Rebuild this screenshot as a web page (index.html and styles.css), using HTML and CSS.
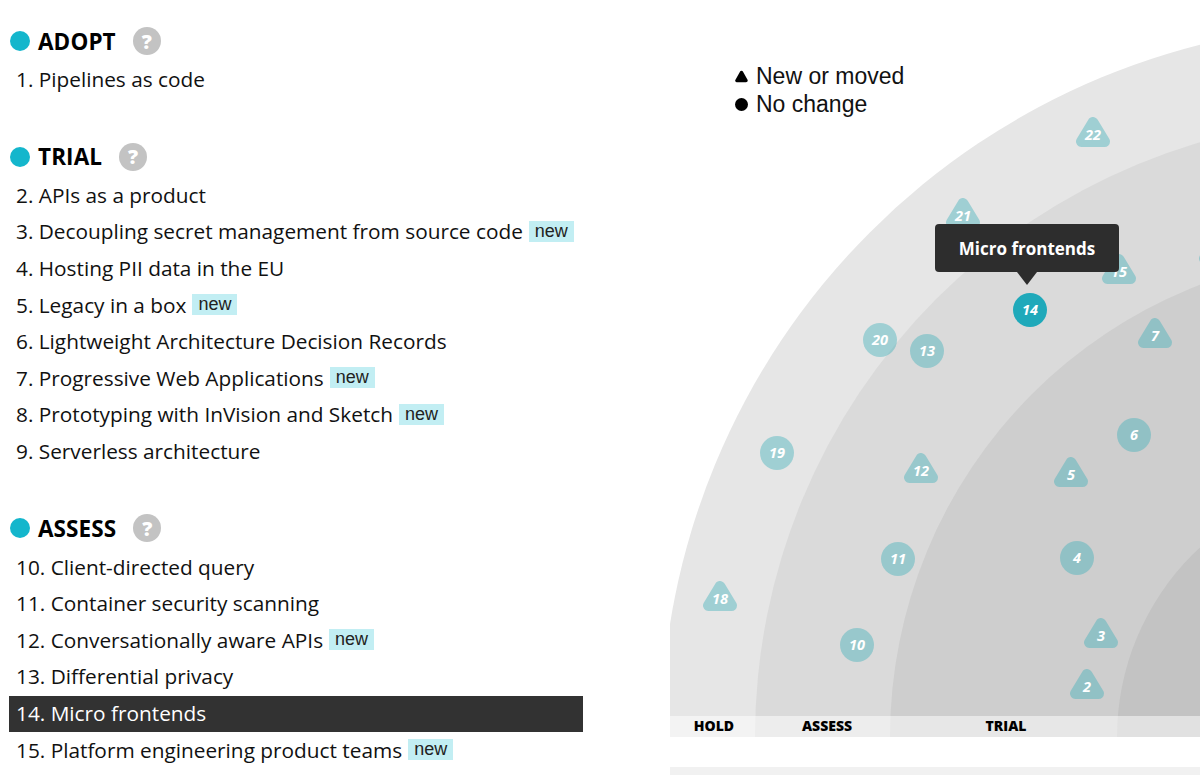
FILE: index.html
```html
<!DOCTYPE html>
<html lang="en">
<head>
<meta charset="utf-8">
<title>Techniques</title>
<link rel="stylesheet" href="styles.css">
</head>
<body>
<div class="page">
  <div class="list">
    <section class="ring">
      <div class="ring-head"><span class="dot"></span><h2>ADOPT</h2><span class="help">?</span></div>
      <ol class="items">
        <li>1. Pipelines as code</li>
      </ol>
    </section>
    <section class="ring">
      <div class="ring-head"><span class="dot"></span><h2>TRIAL</h2><span class="help">?</span></div>
      <ol class="items">
        <li>2. APIs as a product</li>
        <li>3. Decoupling secret management from source code <span class="new">new</span></li>
        <li>4. Hosting PII data in the EU</li>
        <li>5. Legacy in a box <span class="new">new</span></li>
        <li>6. Lightweight Architecture Decision Records</li>
        <li>7. Progressive Web Applications <span class="new">new</span></li>
        <li>8. Prototyping with InVision and Sketch <span class="new">new</span></li>
        <li>9. Serverless architecture</li>
      </ol>
    </section>
    <section class="ring">
      <div class="ring-head"><span class="dot"></span><h2>ASSESS</h2><span class="help">?</span></div>
      <ol class="items">
        <li>10. Client-directed query</li>
        <li>11. Container security scanning</li>
        <li>12. Conversationally aware APIs <span class="new">new</span></li>
        <li>13. Differential privacy</li>
        <li class="active">14. Micro frontends</li>
        <li>15. Platform engineering product teams <span class="new">new</span></li>
      </ol>
    </section>
  </div>

  <div class="radar-panel">
    <svg class="radar" width="530" height="737" viewBox="0 0 530 737">
      <defs>
        <polygon id="tri" points="0,-11.5 -11.5,7.5 11.5,7.5" fill="#3fb1bb" stroke="#3fb1bb" stroke-width="11" stroke-linejoin="round"/>
        <circle id="dot" r="17" fill="#3fb1bb"/>
      </defs>
      <circle cx="705" cy="737" r="714" class="r-hold"/>
      <circle cx="705" cy="737" r="620" class="r-assess"/>
      <circle cx="705" cy="737" r="485" class="r-trial"/>
      <circle cx="705" cy="737" r="258" class="r-adopt"/>

      <use href="#tri" x="423" y="134" class="blip"/><text class="num" x="423" y="140">22</text>
      <use href="#tri" x="293" y="215" class="blip"/><text class="num" x="293" y="221">21</text>
      <use href="#tri" x="449" y="271" class="blip"/><text class="num" x="449" y="277">15</text>
      <use href="#tri" x="546" y="251" class="blip"/>
      <use href="#tri" x="485" y="335" class="blip"/><text class="num" x="485" y="341">7</text>
      <use href="#dot" x="210" y="340" class="blip"/><text class="num" x="210" y="345">20</text>
      <use href="#dot" x="257" y="351" class="blip"/><text class="num" x="257" y="356">13</text>
      <use href="#dot" x="464" y="435" class="blip"/><text class="num" x="464" y="440">6</text>
      <use href="#dot" x="107" y="453" class="blip"/><text class="num" x="107" y="458">19</text>
      <use href="#tri" x="251" y="470" class="blip"/><text class="num" x="251" y="476">12</text>
      <use href="#tri" x="401" y="474" class="blip"/><text class="num" x="401" y="480">5</text>
      <use href="#dot" x="228" y="559" class="blip"/><text class="num" x="228" y="564">11</text>
      <use href="#dot" x="407" y="558" class="blip"/><text class="num" x="407" y="563">4</text>
      <use href="#tri" x="50" y="598" class="blip"/><text class="num" x="50" y="604">18</text>
      <use href="#dot" x="187" y="645" class="blip"/><text class="num" x="187" y="650">10</text>
      <use href="#tri" x="431" y="635" class="blip"/><text class="num" x="431" y="641">3</text>
      <use href="#tri" x="417" y="686" class="blip"/><text class="num" x="417" y="692">2</text>

      <circle cx="360" cy="310" r="17" class="blip-active"/><text class="num" x="360" y="315">14</text>

      <rect x="0" y="716" width="530" height="21" class="band"/>
      <text class="ring-label" x="44" y="731">HOLD</text>
      <text class="ring-label" x="157" y="731">ASSESS</text>
      <text class="ring-label" x="336" y="731">TRIAL</text>
    </svg>

    <div class="legend">
      <div class="legend-row">
        <svg class="legend-icon" width="13" height="13" viewBox="0 0 13 13"><polygon points="6.5,2.5 2,10.5 11,10.5" fill="#000" stroke="#000" stroke-width="3.5" stroke-linejoin="round"/></svg>
        <span>New or moved</span>
      </div>
      <div class="legend-row">
        <svg class="legend-icon" width="13" height="13" viewBox="0 0 13 13"><circle cx="6.5" cy="6.5" r="6.5" fill="#000"/></svg>
        <span>No change</span>
      </div>
    </div>

    <div class="tooltip">Micro frontends</div>

    <div class="next-bar"></div>
  </div>
</div>
</body>
</html>
```

FILE: styles.css
```css
html, body {
  margin: 0;
  padding: 0;
  background: #fff;
}

body {
  width: 1200px;
  height: 775px;
  overflow: hidden;
  font-family: "Open Sans", "Noto Sans", sans-serif;
  color: #111;
}

.page {
  display: flex;
  gap: 87px;
  padding-left: 9px;
}

.list {
  width: 574px;
  padding-top: 20px;
}

.ring {
  margin-bottom: 37px;
}

.ring-head {
  height: 42px;
  display: flex;
  align-items: center;
}

.dot {
  width: 20px;
  height: 20px;
  border-radius: 50%;
  background: #14b6cc;
  margin-left: 1px;
  margin-right: 8px;
  flex: none;
}

.ring-head h2 {
  margin: 0;
  font-size: 22.5px;
  font-weight: 700;
  color: #000;
  letter-spacing: 0.1px;
}

.help {
  width: 28px;
  height: 28px;
  border-radius: 50%;
  background: #c3c3c3;
  color: #fff;
  font-weight: 800;
  font-size: 20px;
  display: flex;
  align-items: center;
  justify-content: center;
  margin-left: 17px;
}

.items {
  list-style: none;
  margin: 0;
  padding: 0;
}

.items li {
  box-sizing: border-box;
  height: 36.6px;
  display: flex;
  align-items: center;
  padding-left: 7px;
  padding-bottom: 2px;
  font-size: 20.8px;
  white-space: nowrap;
}

.items li.active {
  background: #323232;
  color: #fff;
}

.new {
  font-family: "Liberation Sans", Arial, sans-serif;
  font-size: 18px;
  line-height: 21px;
  padding: 0 6px;
  margin-left: 6px;
  background: #c2eef3;
  color: #222;
}

.radar-panel {
  width: 530px;
  height: 775px;
  position: relative;
}

.radar {
  display: block;
}

.r-hold { fill: #e6e6e6; }
.r-assess { fill: #dadada; }
.r-trial { fill: #cecece; }
.r-adopt { fill: #c3c3c3; }

.blip { opacity: 0.42; }
.blip-active { fill: #1fa9ba; }

.num {
  font-family: "Open Sans", sans-serif;
  font-style: italic;
  font-weight: 700;
  font-size: 14.5px;
  fill: #fff;
  text-anchor: middle;
}

.band {
  fill: #fff;
  opacity: 0.5;
}

.ring-label {
  font-family: "Open Sans", sans-serif;
  font-weight: 800;
  font-size: 14px;
  fill: #000;
  text-anchor: middle;
}

.legend {
  position: absolute;
  left: 65px;
  top: 62px;
  font-family: "Liberation Sans", Arial, sans-serif;
  font-size: 23px;
  color: #111;
}

.legend-row {
  display: flex;
  align-items: center;
  gap: 8px;
  height: 28px;
}

.legend-icon {
  display: block;
}

.tooltip {
  position: absolute;
  left: 265px;
  top: 224px;
  width: 184px;
  height: 48px;
  background: #2d2d2d;
  border-radius: 4px;
  color: #fff;
  font-weight: 700;
  font-size: 17px;
  display: flex;
  align-items: center;
  justify-content: center;
}

.tooltip::after {
  content: "";
  position: absolute;
  left: 50%;
  bottom: -13px;
  margin-left: -10px;
  border-left: 10px solid transparent;
  border-right: 10px solid transparent;
  border-top: 13px solid #2d2d2d;
}

.next-bar {
  margin-top: 30px;
  height: 20px;
  background: #f1f1f1;
}
```
